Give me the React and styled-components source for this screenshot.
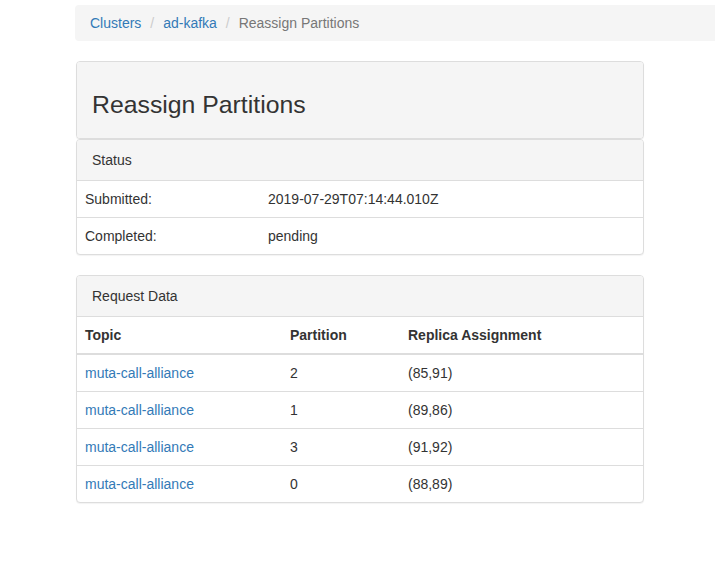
import React from 'react'
import styled, { createGlobalStyle } from 'styled-components'

const GlobalStyle = createGlobalStyle`
    html, body {
        margin: 0;
        padding: 0;
        background: #fff;
        overflow: hidden;
    }
    body {
        font-family: "Liberation Sans", Arial, sans-serif;
        font-size: 14px;
        line-height: 20px;
        color: #333;
    }
    * {
        box-sizing: border-box;
    }
`

const Page = styled.div`
    padding: 5px 0 0 75px;
`

const Breadcrumb = styled.ol`
    list-style: none;
    margin: 0 0 20px 0;
    padding: 8px 15px;
    background: #f5f5f5;
    border-radius: 4px 0 0 4px;
    display: flex;
`

const Crumb = styled.li`
    color: ${p => (p.active ? '#777' : '#337ab7')};

    & + li {
        margin-left: 4px;
    }
    & + li::before {
        content: '/\\00a0';
        padding: 0 5px;
        color: #ccc;
    }
`

const Column = styled.div`
    width: 569px;
    padding-left: 1px;
`

const Panel = styled.div`
    background: #fff;
    border: 1px solid #ddd;
    border-radius: 4px;
    box-shadow: 0 1px 1px rgba(0, 0, 0, 0.05);
    margin-bottom: ${p => p.mb ?? 20}px;
    overflow: hidden;
`

const PanelHeading = styled.div`
    background: #f5f5f5;
    border-bottom: ${p => (p.last ? 'none' : '1px solid #ddd')};
    padding: 10px 15px;
`

const Title = styled.h3`
    margin: 20px 0 10px;
    font-size: 24.8px;
    font-weight: 500;
    line-height: 26.4px;
    color: #333;
`

const Table = styled.table`
    width: 100%;
    border-collapse: collapse;
    border-spacing: 0;
`

const Th = styled.th`
    text-align: left;
    font-weight: bold;
    padding: 8px 8px;
    line-height: 20px;
    border-bottom: 2px solid #ddd;
    width: ${p => p.w || 'auto'};
`

const Td = styled.td`
    padding: 8px 8px;
    line-height: 20px;
    border-top: 1px solid #ddd;
    width: ${p => p.w || 'auto'};
    tr:first-child > & {
        border-top: ${p => (p.noTop ? 'none' : '1px solid #ddd')};
    }
`

const Link = styled.a`
    color: #337ab7;
    text-decoration: none;
`

const rows = [
    { topic: 'muta-call-alliance', partition: 2, replicas: '(85,91)' },
    { topic: 'muta-call-alliance', partition: 1, replicas: '(89,86)' },
    { topic: 'muta-call-alliance', partition: 3, replicas: '(91,92)' },
    { topic: 'muta-call-alliance', partition: 0, replicas: '(88,89)' },
]

export default function App() {
    return (
        <>
            <GlobalStyle />
            <Page>
                <Breadcrumb>
                    <Crumb>Clusters</Crumb>
                    <Crumb>ad-kafka</Crumb>
                    <Crumb active>Reassign Partitions</Crumb>
                </Breadcrumb>

                <Column>
                    <Panel mb={0}>
                        <PanelHeading last>
                            <Title>Reassign Partitions</Title>
                        </PanelHeading>
                    </Panel>

                    <Panel>
                        <PanelHeading>Status</PanelHeading>
                        <Table>
                            <tbody>
                                <tr>
                                    <Td w="183px" noTop>Submitted:</Td>
                                    <Td noTop>2019-07-29T07:14:44.010Z</Td>
                                </tr>
                                <tr>
                                    <Td w="183px">Completed:</Td>
                                    <Td>pending</Td>
                                </tr>
                            </tbody>
                        </Table>
                    </Panel>

                    <Panel>
                        <PanelHeading>Request Data</PanelHeading>
                        <Table>
                            <thead>
                                <tr>
                                    <Th w="205px">Topic</Th>
                                    <Th w="118px">Partition</Th>
                                    <Th>Replica Assignment</Th>
                                </tr>
                            </thead>
                            <tbody>
                                {rows.map((r, i) => (
                                    <tr key={i}>
                                        <Td noTop><Link href="#">{r.topic}</Link></Td>
                                        <Td noTop>{r.partition}</Td>
                                        <Td noTop>{r.replicas}</Td>
                                    </tr>
                                ))}
                            </tbody>
                        </Table>
                    </Panel>
                </Column>
            </Page>
        </>
    )
}
